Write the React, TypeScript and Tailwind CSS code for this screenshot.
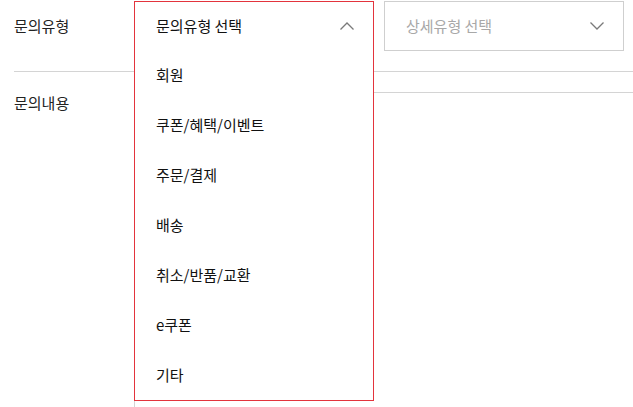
import type { ReactNode } from 'react'

const categories = ['회원', '쿠폰/혜택/이벤트', '주문/결제', '배송', '취소/반품/교환', 'e쿠폰', '기타']

function Chevron({ up }: { up?: boolean }) {
  return (
    <svg width="14" height="8" viewBox="0 0 14 8" fill="none" aria-hidden>
      <polyline
        points={up ? '0.5,7.5 7,1 13.5,7.5' : '0.5,0.5 7,7 13.5,0.5'}
        stroke="#7a7a7a"
        strokeWidth="1.3"
      />
    </svg>
  )
}

function Row({ label, children, className }: { label: string; children: ReactNode; className?: string }) {
  return (
    <div className={`flex ${className ?? ''}`}>
      <div className="w-[120px] shrink-0 text-[15px] leading-[22px] text-[#222]">{label}</div>
      <div className="flex-1">{children}</div>
    </div>
  )
}

export default function App() {
  return (
    <div
      className="w-[633px] h-[407px] overflow-hidden bg-white"
      style={{ fontFamily: '"Malgun Gothic", "Noto Sans CJK KR", "Noto Sans", sans-serif' }}
    >
      <div className="w-[700px] pl-[14px]">
        <div className="flex items-center pt-[1px] pb-[20px] border-b border-[#d4d4d4]">
          <div className="w-[120px] shrink-0 text-[15px] leading-[22px] text-[#222]">문의유형</div>
          <div className="flex gap-[10px]">
            <div className="relative w-[240px] h-[50px]">
              <div className="absolute left-0 top-0 z-10 w-[240px] h-[400px] border border-[#e3343d] bg-white">
                <div className="flex items-center justify-between h-[48px] pl-[21px] pr-[19px] text-[15px] text-[#111]">
                  <span>문의유형 선택</span>
                  <Chevron up />
                </div>
                <ul>
                  {categories.map((c) => (
                    <li key={c} className="flex items-center h-[50px] pl-[21px] text-[15px] text-[#111]">
                      {c}
                    </li>
                  ))}
                </ul>
              </div>
            </div>
            <div className="flex items-center justify-between w-[240px] h-[50px] border border-[#cfcfcf] pl-[21px] pr-[19px] text-[15px] text-[#a8a8a8]">
              <span>상세유형 선택</span>
              <Chevron />
            </div>
          </div>
        </div>
        <Row label="문의내용" className="pt-[20px]">
          <div className="h-[320px] border border-[#d4d4d4]" />
        </Row>
      </div>
    </div>
  )
}
